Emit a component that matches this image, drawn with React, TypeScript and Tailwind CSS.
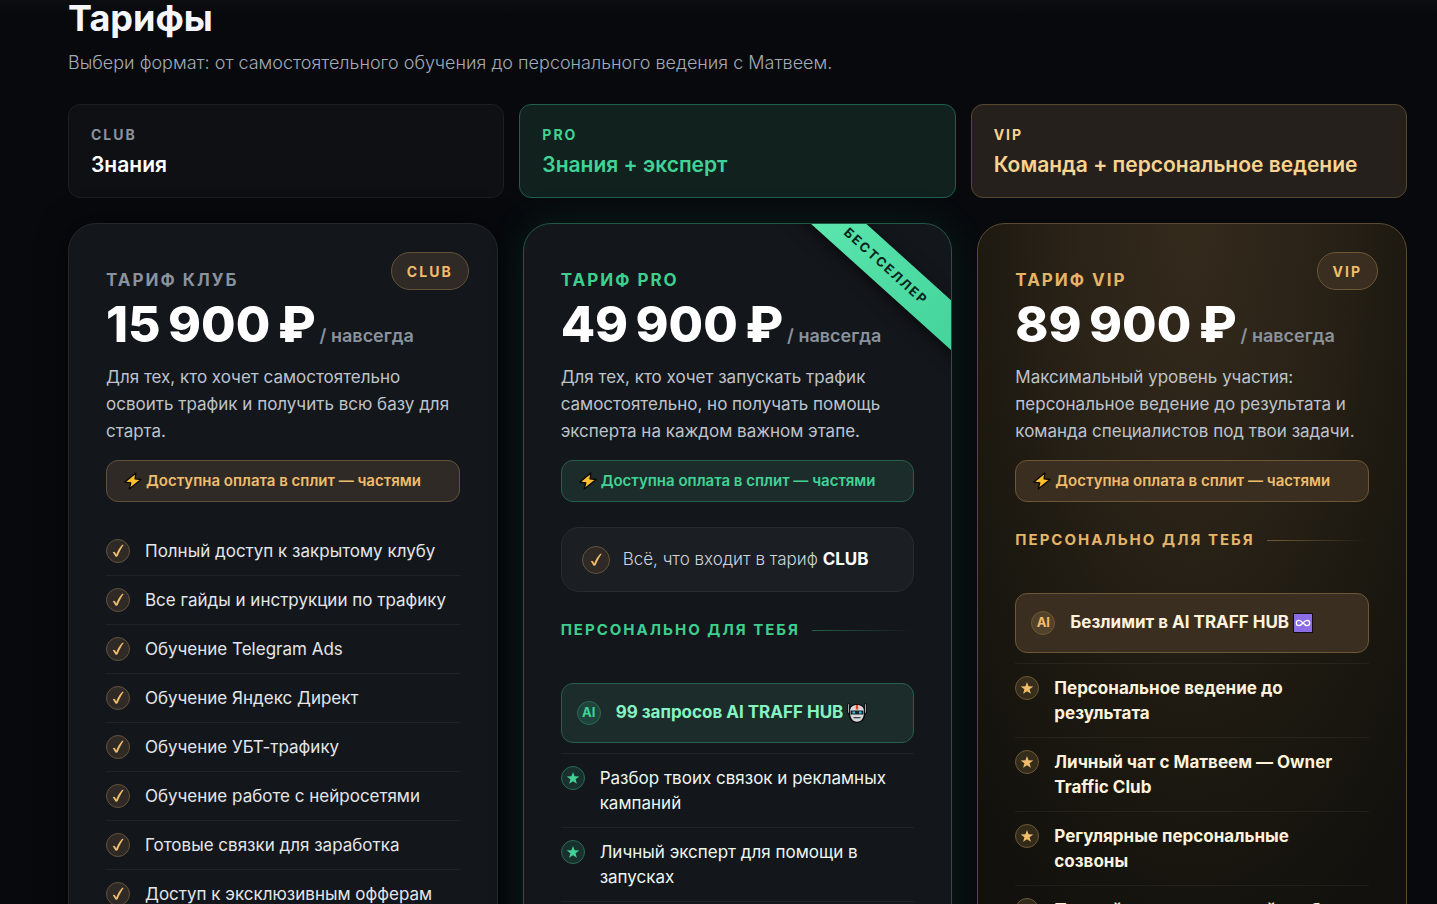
import clsx from "clsx";

type Tone = "club" | "pro" | "vip";

interface PlanProps {
  tone: Tone;
  title: string;
  price: string;
  badge?: string;
  ribbon?: string;
  description: string;
  includes?: string;
  ai?: string;
  features: string[];
}

const groups: { tone: Tone; label: string; title: string }[] = [
  { tone: "club", label: "CLUB", title: "Знания" },
  { tone: "pro", label: "PRO", title: "Знания + эксперт" },
  { tone: "vip", label: "VIP", title: "Команда + персональное ведение" },
];

// thin spaces keep the price compact
const plans: PlanProps[] = [
  {
    tone: "club",
    title: "ТАРИФ КЛУБ",
    price: "15\u2009900\u2009₽",
    badge: "CLUB",
    description: "Для тех, кто хочет самостоятельно освоить трафик и получить всю базу для старта.",
    features: [
      "Полный доступ к закрытому клубу",
      "Все гайды и инструкции по трафику",
      "Обучение Telegram Ads",
      "Обучение Яндекс Директ",
      "Обучение УБТ-трафику",
      "Обучение работе с нейросетями",
      "Готовые связки для заработка",
      "Доступ к эксклюзивным офферам",
    ],
  },
  {
    tone: "pro",
    title: "ТАРИФ PRO",
    price: "49\u2009900\u2009₽",
    ribbon: "БЕСТСЕЛЛЕР",
    description: "Для тех, кто хочет запускать трафик самостоятельно, но получать помощь эксперта на каждом важном этапе.",
    includes: "CLUB",
    ai: "99 запросов AI TRAFF HUB",
    features: [
      "Разбор твоих связок и рекламных кампаний",
      "Личный эксперт для помощи в запусках",
      "Проверка рекламных кампаний",
    ],
  },
  {
    tone: "vip",
    title: "ТАРИФ VIP",
    price: "89\u2009900\u2009₽",
    badge: "VIP",
    description: "Максимальный уровень участия: персональное ведение до результата и команда специалистов под твои задачи.",
    ai: "Безлимит в AI TRAFF HUB",
    features: [
      "Персональное ведение до результата",
      "Личный чат с Матвеем — Owner Traffic Club",
      "Регулярные персональные созвоны",
      "Полный индивидуальный разбор",
    ],
  },
];

const groupStyle: Record<Tone, string> = {
  club: "border-[#1c1e22] bg-[#0e1014] text-white",
  pro: "border-[#1f5f4a] bg-[#10211e] text-[#41d396]",
  vip: "border-[#574630] bg-[#25201b] text-[#f8d490]",
};

const cardStyle: Record<Tone, string> = {
  club: "border-[#23262b] bg-[#13161b] shadow-[0_0_30px_rgba(0,0,0,0.5)]",
  pro: "border-[#225746] bg-[#13161b] shadow-[0_0_40px_rgba(52,211,153,0.10)]",
  vip: "border-[#5b4a30] bg-[#12110d] bg-[radial-gradient(ellipse_75%_100%_at_50%_0%,#342a1c_0%,#2b2318_35%,#1e1a11_65%,#12110d_100%)]",
};

const titleStyle: Record<Tone, string> = {
  club: "text-[#8a929e]",
  pro: "text-[#3ecf8e]",
  vip: "text-[#e5b567]",
};

const noticeStyle: Record<Tone, string> = {
  club: "border-[#63523a] bg-[#302a27] text-[#efbd6c]",
  pro: "border-[#25604c] bg-[#1b2c2b] text-[#41d396]",
  vip: "border-[#6d5836] bg-[#3a2e20] text-[#efbd6c]",
};

const iconStyle: Record<Tone, string> = {
  club: "border-[#63523a] bg-[#302a27] text-[#efbd6c]",
  pro: "border-[#2a6b55] bg-[#34d399]/15 text-[#41d396]",
  vip: "border-[#6d5836] bg-[#e5b567]/15 text-[#efbd6c]",
};

function Bolt() {
  return (
    <svg viewBox="0 0 18 18" className="size-[18px] shrink-0" aria-hidden="true">
      <path
        d="M11.8.9.9 10.1l5.9.7-1.600 6.300L17.100 7.500l-6-.6L11.800.9Z"
        fill="#fcc02f"
        stroke="#080605"
        strokeWidth="1.300"
        strokeLinejoin="round"
      />
    </svg>
  );
}

function Check() {
  return (
    <svg viewBox="0 0 12 14" className="h-3.5 w-3" aria-hidden="true">
      <path
        d="M.8 8.300c.8-.8 1.700-.8 2.200 0l1.200 2.200C5.800 6.800 7.500 3.500 9.800 1.200c.6-.6 1.500-.6 1.800-.1C9.300 4.400 7.400 8 5.700 12.100c-.5.9-1.800 1-2.400.2L.8 8.300Z"
        fill="currentColor"
      />
    </svg>
  );
}

function Star() {
  return (
    <svg viewBox="0 0 24 24" className="size-3.5" aria-hidden="true">
      <path
        d="m12 1.500 2.700 7.600 8.100.2-6.400 4.900 2.300 7.800-6.700-4.600L5.300 22l2.300-7.800-6.400-4.900 8.100-.2L12 1.500Z"
        fill="currentColor"
      />
    </svg>
  );
}

function Robot() {
  return (
    <svg viewBox="0 0 20 20" className="size-5 shrink-0" aria-hidden="true">
      <path
        d="M.2.5h2.600v3.200C4.900 1.600 7.200.9 10 .9s5.100.7 7.200 2.800V.5h2.600v9.200l-1.600 2.500c-.3 4.500-3.200 7.600-8.200 7.600s-7.900-3.100-8.200-7.600L.2 9.700Z"
        fill="#0b0d0d"
      />
      <path d="M1 1.300h1v9l-1-1V1.300ZM18 1.300h1v8l-1 1v-9Z" fill="#a2a8ab" />
      <path
        d="M10 2c4.500 0 7 2.200 7 6.500 0 6.500-2.500 10.300-7 10.300S3 15 3 8.500C3 4.200 5.500 2 10 2Z"
        fill="#d6d8da"
      />
      <path d="M8.800 2h2.400v4.500H8.800Z" fill="#f1432c" />
      <path d="M3.500 7.500h13v4h-13Z" fill="#1a2328" />
      <path d="M5.500 8.500h2.500v2H5.500ZM12 8.500h2.500v2H12Z" fill="#31c6f2" />
      <path d="M6.500 14h7v1.300h-7Z" fill="#3e4447" />
    </svg>
  );
}

function Infinity() {
  return (
    <svg viewBox="0 0 20 20" className="size-5 shrink-0" aria-hidden="true">
      <path d="M0 0h20v20H0Z" fill="#120d13" />
      <path d="M1 1h18v18H1Z" fill="#8c6de6" />
      <path
        d="M10 10c-1.500-1.700-2.600-2.700-4-2.700a2.700 2.700 0 0 0 0 5.400c1.400 0 2.500-1 4-2.700s2.600-2.700 4-2.700a2.700 2.700 0 0 1 0 5.400c-1.400 0-2.500-1-4-2.700Z"
        fill="none"
        stroke="#fff"
        strokeWidth="1.200"
      />
    </svg>
  );
}

function RoundIcon({ tone, children }: { tone: Tone; children: React.ReactNode }) {
  return (
    <span
      className={clsx(
        "flex size-6 shrink-0 items-center justify-center rounded-full border text-[13px] font-bold",
        iconStyle[tone],
      )}
    >
      {children}
    </span>
  );
}

function Plan({ data }: { data: PlanProps }) {
  const { tone } = data;

  return (
    <article className={clsx("relative overflow-hidden rounded-[28px] border px-[37px] pt-11 pb-10", cardStyle[tone])}>
      {data.badge && (
        <span
          className={clsx(
            "absolute top-7 right-7 flex h-[38px] items-center rounded-full border px-[15px] text-[14px] font-bold tracking-[2px]",
            noticeStyle[tone],
          )}
        >
          {data.badge}
        </span>
      )}
      {data.ribbon && (
        <div className="absolute top-6 -right-[55px] flex h-[37px] w-60 rotate-[42deg] items-center justify-center bg-linear-to-r from-[#5ee9b0] to-[#41d29a] text-[13px] font-bold tracking-[2px] text-[#06251b] shadow-[0_4px_16px_rgba(0,0,0,0.5)]">
          {data.ribbon}
        </div>
      )}

      <h3 className={clsx("text-[17px] leading-6 font-bold tracking-[2px]", titleStyle[tone])}>{data.title}</h3>
      <p className="mt-1 flex items-baseline gap-1 whitespace-nowrap">
        <strong className="text-[50px] leading-[56px] font-extrabold text-white">{data.price}</strong>
        <span className="text-[18px] leading-6 font-semibold text-[#8a929e]">/ навсегда</span>
      </p>
      <p className="mt-3 text-[17px] leading-[27px] text-[#bec3cc]">{data.description}</p>

      <div
        className={clsx(
          "mt-[15px] flex h-[42px] items-center gap-1 rounded-xl border px-[17px] text-[15px] font-semibold whitespace-nowrap",
          noticeStyle[tone],
        )}
      >
        <Bolt />
        Доступна оплата в сплит — частями
      </div>

      {data.includes && (
        <div className="mt-[25px] flex h-[65px] items-center gap-[13px] rounded-[18px] border border-[#282b30] bg-[#1b1e23] px-5 text-[17px] whitespace-nowrap text-[#d0d4db]">
          <span className="flex size-7 items-center justify-center rounded-full border border-[#63523a] bg-[#302a27] text-[#efbd6c]">
            <Check />
          </span>
          <span className="font-light">
            Всё, что входит в тариф <strong className="font-bold text-white">{data.includes}</strong>
          </span>
        </div>
      )}

      {data.ai && (
        <>
          <h4
            className={clsx(
              "mt-[26px] flex items-center gap-3 text-[15px] leading-6 font-bold tracking-[2px] whitespace-nowrap",
              titleStyle[tone],
            )}
          >
            ПЕРСОНАЛЬНО ДЛЯ ТЕБЯ
            <span className="h-px flex-1 bg-linear-to-r from-current/40 to-transparent" />
          </h4>
          <div
            className={clsx(
              "mt-[41px] mb-2.5 flex h-[60px] items-center gap-[15px] rounded-xl border px-[15px] text-[17px] font-bold whitespace-nowrap",
              noticeStyle[tone],
            )}
          >
            <RoundIcon tone={tone}>AI</RoundIcon>
            <span className={clsx("flex items-center gap-1", tone === "pro" ? "text-[#86f4c2]" : "text-[#fff2dc]")}>
              {data.ai}
              {tone === "pro" ? <Robot /> : <Infinity />}
            </span>
          </div>
        </>
      )}

      <ul className={clsx(!data.ai && "mt-6")}>
        {data.features.map((feature, index) => (
          <li
            key={feature}
            className={clsx(
              "flex items-start gap-[15px] border-t pt-3 pb-[11px] text-[17px] leading-[25px]",
              index === 0 && !data.ai ? "border-transparent" : "border-white/5",
              tone === "club" && "text-[#e3e6ea]",
              tone === "pro" && "text-[#ecf7f2]",
              tone === "vip" && "font-bold text-[#fff2dc]",
            )}
          >
            <RoundIcon tone={tone}>{tone === "club" ? <Check /> : <Star />}</RoundIcon>
            <span className="pr-2">{feature}</span>
          </li>
        ))}
      </ul>
    </article>
  );
}

export default function App() {
  return (
    <main className="h-screen overflow-hidden bg-[#07090d] bg-linear-to-b from-[#0d0e10] to-[#07090d] to-[14px] pr-[30px] pl-[68px] font-['Inter','Liberation_Sans',sans-serif]">
      <h2 className="text-[36px] leading-9 font-bold text-[#f5f6fa]">Тарифы</h2>
      <p className="mt-[13px] text-[18px] leading-[27px] font-light text-[#a3abb7]">
        Выбери формат: от самостоятельного обучения до персонального ведения с Матвеем.
      </p>

      <div className="mt-7 grid grid-cols-3 gap-[15px]">
        {groups.map((group) => (
          <div
            key={group.label}
            className={clsx("rounded-xl border px-[22px] pt-5 pb-[17px] whitespace-nowrap", groupStyle[group.tone])}
          >
            <p
              className={clsx(
                "text-[14px] leading-5 font-bold tracking-[2px]",
                group.tone === "club" && "text-[#8a929e]",
              )}
            >
              {group.label}
            </p>
            <p className="mt-[5px] text-[21px] leading-[30px] font-semibold">{group.title}</p>
          </div>
        ))}
      </div>

      <div className="mt-[25px] grid grid-cols-3 items-stretch gap-[25px]">
        {plans.map((plan) => (
          <Plan key={plan.tone} data={plan} />
        ))}
      </div>
    </main>
  );
}
